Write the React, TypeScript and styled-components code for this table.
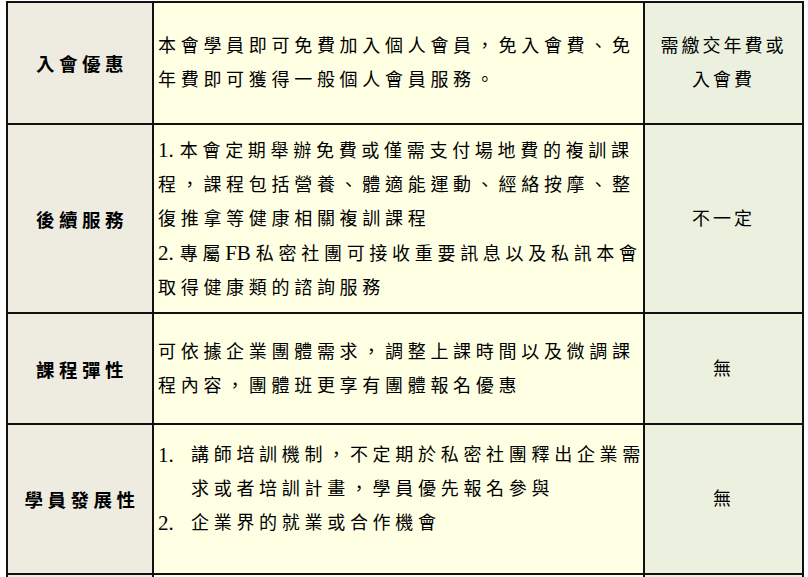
import React from "react";
import styled, { createGlobalStyle } from "styled-components";

const Global = createGlobalStyle`
  html, body { margin: 0; padding: 0; background: #ffffff; }
  body {
    font-family: "Liberation Serif", "Noto Sans CJK TC", serif;
    color: #000000;
  }
`;

const Table = styled.table`
  margin: 1px 0 0 6px;
  width: 796px;
  border-collapse: collapse;
  table-layout: fixed;
`;

const Row = styled.tr<{ $h: number }>`
  height: ${(p) => p.$h}px;
`;

const Cell = styled.td`
  border: 2px solid #111;
  padding: 0;
  vertical-align: middle;
`;

const HeadCell = styled(Cell)`
  background: #eeece1;
  text-align: center;
  font-family: "Noto Sans CJK TC", sans-serif;
  font-weight: 700;
  font-size: 18.5px;
  letter-spacing: 4.5px;
  text-indent: 4px;
`;

const BodyCell = styled(Cell)<{ $pb?: number }>`
  background: #ffffe3;
  padding: 0 0 ${(p) => p.$pb ?? 0}px 4px;
  font-size: 18px;
  letter-spacing: 4.7px;
  line-height: 34px;
`;

const NoteCell = styled(Cell)<{ $pb?: number }>`
  background: #ebf1de;
  text-align: center;
  padding-bottom: ${(p) => p.$pb ?? 0}px;
  font-size: 18px;
  letter-spacing: 3px;
  line-height: 34px;
`;

const Line = styled.div`
  white-space: nowrap;
`;

const Latin = styled.span<{ $after?: number }>`
  font-family: "Liberation Serif", serif;
  font-size: 21px;
  letter-spacing: 0;
  margin-right: ${(p) => p.$after ?? 0}px;
`;

const Item = styled.div`
  display: flex;
  white-space: nowrap;
`;

const ItemNum = styled.span`
  flex: 0 0 33px;
  font-family: "Liberation Serif", serif;
  font-size: 21px;
  letter-spacing: 0;
`;

const ItemBody = styled.div`
  display: flex;
  flex-direction: column;
`;

export default function App() {
  return (
    <>
      <Global />
      <Table>
        <colgroup>
          <col style={{ width: 146 }} />
          <col style={{ width: 491 }} />
          <col style={{ width: 159 }} />
        </colgroup>
        <tbody>
          <Row $h={122}>
            <HeadCell>入會優惠</HeadCell>
            <BodyCell>
              <Line>本會學員即可免費加入個人會員，免入會費、免</Line>
              <Line>年費即可獲得一般個人會員服務。</Line>
            </BodyCell>
            <NoteCell>
              <Line>需繳交年費或</Line>
              <Line>入會費</Line>
            </NoteCell>
          </Row>
          <Row $h={189}>
            <HeadCell>後續服務</HeadCell>
            <BodyCell>
              <Line>
                <Latin $after={6}>1.</Latin>本會定期舉辦免費或僅需支付場地費的複訓課
              </Line>
              <Line>程，課程包括營養、體適能運動、經絡按摩、整</Line>
              <Line>復推拿等健康相關複訓課程</Line>
              <Line>
                <Latin $after={6}>2.</Latin>專屬<Latin $after={5}>FB</Latin>私密社團可接收重要訊息以及私訊本會
              </Line>
              <Line>取得健康類的諮詢服務</Line>
            </BodyCell>
            <NoteCell>不一定</NoteCell>
          </Row>
          <Row $h={111}>
            <HeadCell>課程彈性</HeadCell>
            <BodyCell>
              <Line>可依據企業團體需求，調整上課時間以及微調課</Line>
              <Line>程內容，團體班更享有團體報名優惠</Line>
            </BodyCell>
            <NoteCell>無</NoteCell>
          </Row>
          <Row $h={150}>
            <HeadCell>學員發展性</HeadCell>
            <BodyCell $pb={20}>
              <Item>
                <ItemNum>1.</ItemNum>
                <ItemBody>
                  <Line>講師培訓機制，不定期於私密社團釋出企業需</Line>
                  <Line>求或者培訓計畫，學員優先報名參與</Line>
                </ItemBody>
              </Item>
              <Item>
                <ItemNum>2.</ItemNum>
                <ItemBody>
                  <Line>企業界的就業或合作機會</Line>
                </ItemBody>
              </Item>
            </BodyCell>
            <NoteCell>無</NoteCell>
          </Row>
          <Row $h={60}>
            <HeadCell />
            <BodyCell />
            <NoteCell />
          </Row>
        </tbody>
      </Table>
    </>
  );
}
